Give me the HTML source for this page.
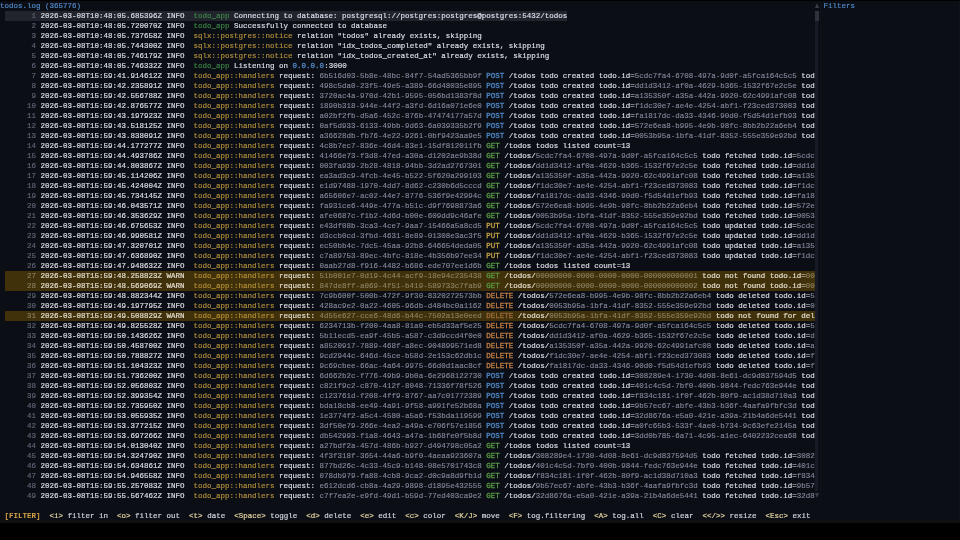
<!DOCTYPE html>
<html><head><meta charset="utf-8"><title>todos.log</title>
<style>
html,body{margin:0;padding:0;background:#000;}
body{width:960px;height:540px;overflow:hidden;position:relative;font-family:"Liberation Mono",monospace;}
#term{position:absolute;left:0;top:1px;width:960px;height:519.5px;background:#0c0e16;}
#redge{position:absolute;left:958.6px;top:1px;width:1.4px;height:519px;background:#10121b;}
#vline{position:absolute;left:819.5px;top:1px;width:1px;height:504px;background:#0f111a;}
#edge{position:absolute;left:0;top:520px;width:960px;height:3px;background:#101011;}
.r{position:absolute;left:0;height:10px;line-height:10px;font-size:7.5px;white-space:pre;color:#d3d6e0;letter-spacing:0;-webkit-text-stroke:0.2px;}
#txt{position:absolute;left:0;top:0;width:960px;height:540px;transform:translateZ(0);backface-visibility:hidden;}
.bg{position:absolute;height:10px;}
.sel{background:#21232d;}
.warn{background:#41310a;}
.ln{color:#5d6272;}
.tx{color:#d9dce6;}
.ti{color:#4f87c5;-webkit-text-stroke:0.2px;}
.g{color:#429249;-webkit-text-stroke:0.1px;}
.y{color:#b5923c;-webkit-text-stroke:0.15px;}
.u{color:#858a9b;-webkit-text-stroke:0.12px;}
.b{color:#4f88c6;-webkit-text-stroke:0.3px;}
.G{color:#589c46;-webkit-text-stroke:0.3px;}
.P{color:#c6a444;-webkit-text-stroke:0.3px;}
.D{color:#c07e42;-webkit-text-stroke:0.3px;}
.w .u{color:#8c8362;}
.w .ln{color:#857b5a;}
.w .tx{color:#e2dccb;}
.w .D{color:#9c6a3a;}
.w .G{color:#5a9640;}
.w .y{color:#b89236;}
.fm{color:#d4a346;font-weight:bold;-webkit-text-stroke:0;}
.k{color:#e3d4a2;}
.kd{color:#cfd2dc;}
.arr{position:absolute;width:4.5px;height:10px;}
.arr.up:after{content:"";position:absolute;left:0.1px;top:2.2px;border-left:2.25px solid transparent;border-right:2.25px solid transparent;border-bottom:5.2px solid #3a3d48;}
.arr.dn:after{content:"";position:absolute;left:0.1px;top:2.3px;border-left:2.25px solid transparent;border-right:2.25px solid transparent;border-top:5.2px solid #3a3d48;}
.thumb{position:absolute;width:4.3px;height:10px;background:#2f323d;}
.track{position:absolute;width:4.5px;}
.track:before{content:"";position:absolute;left:0.8px;top:0;bottom:0;width:3px;background:#181b25;}
</style></head>
<body>
<div id="term"></div>
<div id="redge"></div>
<div id="vline"></div>
<div id="edge"></div>
<div id="txt">
<div class="r " style="top:1px"><span class="ti">todos.log (365776)</span></div>
<div class="bg sel" style="top:10.6px;left:4.7px;width:562.5px"></div>
<div class="r " style="top:11px"><span class="ln">       1 </span><span class="tx">2026-03-08T10:48:05.685396Z </span><span class="tx">INFO  </span><span class="g">todo_app</span><span class="tx"> </span><span class="tx">Connecting to database: postgresql://postgres:postgres@postgres:5432/todos</span></div>
<div class="r " style="top:21px"><span class="ln">       2 </span><span class="tx">2026-03-08T10:48:05.720070Z </span><span class="tx">INFO  </span><span class="g">todo_app</span><span class="tx"> </span><span class="tx">Successfully connected to database</span></div>
<div class="r " style="top:31px"><span class="ln">       3 </span><span class="tx">2026-03-08T10:48:05.737658Z </span><span class="tx">INFO  </span><span class="y">sqlx::postgres::notice</span><span class="tx"> </span><span class="tx">relation "todos" already exists, skipping</span></div>
<div class="r " style="top:41px"><span class="ln">       4 </span><span class="tx">2026-03-08T10:48:05.744300Z </span><span class="tx">INFO  </span><span class="y">sqlx::postgres::notice</span><span class="tx"> </span><span class="tx">relation "idx_todos_completed" already exists, skipping</span></div>
<div class="r " style="top:51px"><span class="ln">       5 </span><span class="tx">2026-03-08T10:48:05.746179Z </span><span class="tx">INFO  </span><span class="y">sqlx::postgres::notice</span><span class="tx"> </span><span class="tx">relation "idx_todos_created_at" already exists, skipping</span></div>
<div class="r " style="top:61px"><span class="ln">       6 </span><span class="tx">2026-03-08T10:48:05.746332Z </span><span class="tx">INFO  </span><span class="g">todo_app</span><span class="tx"> </span><span class="tx">Listening on </span><span class="b">0.0.0.0</span><span class="tx">:3000</span></div>
<div class="r " style="top:71px"><span class="ln">       7 </span><span class="tx">2026-03-08T15:59:41.914612Z </span><span class="tx">INFO  </span><span class="y">todo_app::handlers</span><span class="tx"> </span><span class="tx">request: </span><span class="u">6b516d03-5b8e-48bc-84f7-54ad5365bb9f</span><span class="tx"> </span><span class="b">POST</span><span class="tx"> /todos todo created todo.id=</span><span class="u">5cdc7fa4-6708-497a-9d0f-a5fca164c5c5</span><span class="tx"> tod</span></div>
<div class="r " style="top:81px"><span class="ln">       8 </span><span class="tx">2026-03-08T15:59:42.235891Z </span><span class="tx">INFO  </span><span class="y">todo_app::handlers</span><span class="tx"> </span><span class="tx">request: </span><span class="u">498c5da0-23f5-49e5-a389-66d48035e895</span><span class="tx"> </span><span class="b">POST</span><span class="tx"> /todos todo created todo.id=</span><span class="u">dd1d3412-af0a-4629-b365-1532f67e2c5e</span><span class="tx"> tod</span></div>
<div class="r " style="top:91px"><span class="ln">       9 </span><span class="tx">2026-03-08T15:59:42.556788Z </span><span class="tx">INFO  </span><span class="y">todo_app::handlers</span><span class="tx"> </span><span class="tx">request: </span><span class="u">3720ac4a-970d-42b1-9595-056bd1383f8d</span><span class="tx"> </span><span class="b">POST</span><span class="tx"> /todos todo created todo.id=</span><span class="u">a135350f-a35a-442a-9920-62c4991afc08</span><span class="tx"> tod</span></div>
<div class="r " style="top:101px"><span class="ln">      10 </span><span class="tx">2026-03-08T15:59:42.876577Z </span><span class="tx">INFO  </span><span class="y">todo_app::handlers</span><span class="tx"> </span><span class="tx">request: </span><span class="u">1890b318-944e-44f2-a3fd-6d16a071e6e0</span><span class="tx"> </span><span class="b">POST</span><span class="tx"> /todos todo created todo.id=</span><span class="u">f1dc30e7-ae4e-4254-abf1-f23ced373083</span><span class="tx"> tod</span></div>
<div class="r " style="top:111px"><span class="ln">      11 </span><span class="tx">2026-03-08T15:59:43.197923Z </span><span class="tx">INFO  </span><span class="y">todo_app::handlers</span><span class="tx"> </span><span class="tx">request: </span><span class="u">a02bf2fb-d5a6-452c-876b-47474177a57d</span><span class="tx"> </span><span class="b">POST</span><span class="tx"> /todos todo created todo.id=</span><span class="u">fa1817dc-da33-4346-90d0-f5d54d1efb93</span><span class="tx"> tod</span></div>
<div class="r " style="top:121px"><span class="ln">      12 </span><span class="tx">2026-03-08T15:59:43.518125Z </span><span class="tx">INFO  </span><span class="y">todo_app::handlers</span><span class="tx"> </span><span class="tx">request: </span><span class="u">0af5d933-6133-49bb-9d63-6a039335b2f9</span><span class="tx"> </span><span class="b">POST</span><span class="tx"> /todos todo created todo.id=</span><span class="u">572e6ea8-b995-4e9b-98fc-8bb2b22a6eb4</span><span class="tx"> tod</span></div>
<div class="r " style="top:131px"><span class="ln">      13 </span><span class="tx">2026-03-08T15:59:43.838091Z </span><span class="tx">INFO  </span><span class="y">todo_app::handlers</span><span class="tx"> </span><span class="tx">request: </span><span class="u">a36628db-fb76-4e22-9261-0bf9423aa9e5</span><span class="tx"> </span><span class="b">POST</span><span class="tx"> /todos todo created todo.id=</span><span class="u">0053b95a-1bfa-41df-8352-555e359e92bd</span><span class="tx"> tod</span></div>
<div class="r " style="top:141px"><span class="ln">      14 </span><span class="tx">2026-03-08T15:59:44.177277Z </span><span class="tx">INFO  </span><span class="y">todo_app::handlers</span><span class="tx"> </span><span class="tx">request: </span><span class="u">4c8b7ec7-836e-46d4-83e1-15df812011fb</span><span class="tx"> </span><span class="G">GET</span><span class="tx"> /todos todos listed count=13</span></div>
<div class="r " style="top:151px"><span class="ln">      15 </span><span class="tx">2026-03-08T15:59:44.493786Z </span><span class="tx">INFO  </span><span class="y">todo_app::handlers</span><span class="tx"> </span><span class="tx">request: </span><span class="u">41466e73-f3d8-47ed-a30a-d1202ae9b38d</span><span class="tx"> </span><span class="G">GET</span><span class="tx"> /todos/</span><span class="u">5cdc7fa4-6708-497a-9d0f-a5fca164c5c5</span><span class="tx"> todo fetched todo.id=</span><span class="u">5cdc</span></div>
<div class="r " style="top:161px"><span class="ln">      16 </span><span class="tx">2026-03-08T15:59:44.803867Z </span><span class="tx">INFO  </span><span class="y">todo_app::handlers</span><span class="tx"> </span><span class="tx">request: </span><span class="u">003fa939-2b28-4818-94bb-3d2ad2767301</span><span class="tx"> </span><span class="G">GET</span><span class="tx"> /todos/</span><span class="u">dd1d3412-af0a-4629-b365-1532f67e2c5e</span><span class="tx"> todo fetched todo.id=</span><span class="u">dd1d</span></div>
<div class="r " style="top:171px"><span class="ln">      17 </span><span class="tx">2026-03-08T15:59:45.114206Z </span><span class="tx">INFO  </span><span class="y">todo_app::handlers</span><span class="tx"> </span><span class="tx">request: </span><span class="u">ea3ad3c9-4fcb-4e45-b522-5f620a299103</span><span class="tx"> </span><span class="G">GET</span><span class="tx"> /todos/</span><span class="u">a135350f-a35a-442a-9920-62c4991afc08</span><span class="tx"> todo fetched todo.id=</span><span class="u">a135</span></div>
<div class="r " style="top:181px"><span class="ln">      18 </span><span class="tx">2026-03-08T15:59:45.424004Z </span><span class="tx">INFO  </span><span class="y">todo_app::handlers</span><span class="tx"> </span><span class="tx">request: </span><span class="u">e1d97488-1970-4dd7-8d62-c230b6d5cccd</span><span class="tx"> </span><span class="G">GET</span><span class="tx"> /todos/</span><span class="u">f1dc30e7-ae4e-4254-abf1-f23ced373083</span><span class="tx"> todo fetched todo.id=</span><span class="u">f1dc</span></div>
<div class="r " style="top:191px"><span class="ln">      19 </span><span class="tx">2026-03-08T15:59:45.734145Z </span><span class="tx">INFO  </span><span class="y">todo_app::handlers</span><span class="tx"> </span><span class="tx">request: </span><span class="u">a65606e7-ac02-44e7-8776-536f9e42994c</span><span class="tx"> </span><span class="G">GET</span><span class="tx"> /todos/</span><span class="u">fa1817dc-da33-4346-90d0-f5d54d1efb93</span><span class="tx"> todo fetched todo.id=</span><span class="u">fa18</span></div>
<div class="r " style="top:201px"><span class="ln">      20 </span><span class="tx">2026-03-08T15:59:46.043571Z </span><span class="tx">INFO  </span><span class="y">todo_app::handlers</span><span class="tx"> </span><span class="tx">request: </span><span class="u">fa931ce6-449e-477a-b51c-d9f7698873a6</span><span class="tx"> </span><span class="G">GET</span><span class="tx"> /todos/</span><span class="u">572e6ea8-b995-4e9b-98fc-8bb2b22a6eb4</span><span class="tx"> todo fetched todo.id=</span><span class="u">572e</span></div>
<div class="r " style="top:211px"><span class="ln">      21 </span><span class="tx">2026-03-08T15:59:46.353629Z </span><span class="tx">INFO  </span><span class="y">todo_app::handlers</span><span class="tx"> </span><span class="tx">request: </span><span class="u">afe0687c-f1b2-4d6d-b00e-609dd9c46afe</span><span class="tx"> </span><span class="G">GET</span><span class="tx"> /todos/</span><span class="u">0053b95a-1bfa-41df-8352-555e359e92bd</span><span class="tx"> todo fetched todo.id=</span><span class="u">0053</span></div>
<div class="r " style="top:221px"><span class="ln">      22 </span><span class="tx">2026-03-08T15:59:46.675653Z </span><span class="tx">INFO  </span><span class="y">todo_app::handlers</span><span class="tx"> </span><span class="tx">request: </span><span class="u">e43df08b-3ca3-4ce7-9aa7-15466a5a8cd5</span><span class="tx"> </span><span class="P">PUT</span><span class="tx"> /todos/</span><span class="u">5cdc7fa4-6708-497a-9d0f-a5fca164c5c5</span><span class="tx"> todo updated todo.id=</span><span class="u">5cdc</span></div>
<div class="r " style="top:231px"><span class="ln">      23 </span><span class="tx">2026-03-08T15:59:46.990581Z </span><span class="tx">INFO  </span><span class="y">todo_app::handlers</span><span class="tx"> </span><span class="tx">request: </span><span class="u">d3ccb0cd-3fbd-4631-8e89-01308e3ac3f5</span><span class="tx"> </span><span class="P">PUT</span><span class="tx"> /todos/</span><span class="u">dd1d3412-af0a-4629-b365-1532f67e2c5e</span><span class="tx"> todo updated todo.id=</span><span class="u">dd1d</span></div>
<div class="r " style="top:241px"><span class="ln">      24 </span><span class="tx">2026-03-08T15:59:47.320701Z </span><span class="tx">INFO  </span><span class="y">todo_app::handlers</span><span class="tx"> </span><span class="tx">request: </span><span class="u">ec50bb4c-7dc5-45aa-92b8-646654deda05</span><span class="tx"> </span><span class="P">PUT</span><span class="tx"> /todos/</span><span class="u">a135350f-a35a-442a-9920-62c4991afc08</span><span class="tx"> todo updated todo.id=</span><span class="u">a135</span></div>
<div class="r " style="top:251px"><span class="ln">      25 </span><span class="tx">2026-03-08T15:59:47.636890Z </span><span class="tx">INFO  </span><span class="y">todo_app::handlers</span><span class="tx"> </span><span class="tx">request: </span><span class="u">c7a89753-89ec-4bfc-818e-4b356b97ee34</span><span class="tx"> </span><span class="P">PUT</span><span class="tx"> /todos/</span><span class="u">f1dc30e7-ae4e-4254-abf1-f23ced373083</span><span class="tx"> todo updated todo.id=</span><span class="u">f1dc</span></div>
<div class="r " style="top:261px"><span class="ln">      26 </span><span class="tx">2026-03-08T15:59:47.948632Z </span><span class="tx">INFO  </span><span class="y">todo_app::handlers</span><span class="tx"> </span><span class="tx">request: </span><span class="u">0aab27d8-f916-4482-b686-ede707ee1d6b</span><span class="tx"> </span><span class="G">GET</span><span class="tx"> /todos todos listed count=13</span></div>
<div class="bg warn" style="top:270.6px;left:4.7px;width:810px"></div>
<div class="r w" style="top:271px"><span class="ln">      27 </span><span class="tx">2026-03-08T15:59:48.258823Z </span><span class="tx">WARN  </span><span class="y">todo_app::handlers</span><span class="tx"> </span><span class="tx">request: </span><span class="u">51b001e7-0d19-4c44-acf9-18e94c235438</span><span class="tx"> </span><span class="G">GET</span><span class="tx"> /todos/</span><span class="u">00000000-0000-0000-0000-000000000001</span><span class="tx"> todo not found todo.id=</span><span class="u">00</span></div>
<div class="bg warn" style="top:280.6px;left:4.7px;width:810px"></div>
<div class="r w" style="top:281px"><span class="ln">      28 </span><span class="tx">2026-03-08T15:59:48.569069Z </span><span class="tx">WARN  </span><span class="y">todo_app::handlers</span><span class="tx"> </span><span class="tx">request: </span><span class="u">847de8ff-a069-4f51-b419-589733c7fab9</span><span class="tx"> </span><span class="G">GET</span><span class="tx"> /todos/</span><span class="u">00000000-0000-0000-0000-000000000002</span><span class="tx"> todo not found todo.id=</span><span class="u">00</span></div>
<div class="r " style="top:291px"><span class="ln">      29 </span><span class="tx">2026-03-08T15:59:48.882344Z </span><span class="tx">INFO  </span><span class="y">todo_app::handlers</span><span class="tx"> </span><span class="tx">request: </span><span class="u">7c9b600f-500b-472f-9f30-8320272573bb</span><span class="tx"> </span><span class="D">DELETE</span><span class="tx"> /todos/</span><span class="u">572e6ea8-b995-4e9b-98fc-8bb2b22a6eb4</span><span class="tx"> todo deleted todo.id=</span><span class="u">5</span></div>
<div class="r " style="top:301px"><span class="ln">      30 </span><span class="tx">2026-03-08T15:59:49.197795Z </span><span class="tx">INFO  </span><span class="y">todo_app::handlers</span><span class="tx"> </span><span class="tx">request: </span><span class="u">428ac9e2-0a22-4605-96db-d484bc0a1162</span><span class="tx"> </span><span class="D">DELETE</span><span class="tx"> /todos/</span><span class="u">0053b95a-1bfa-41df-8352-555e359e92bd</span><span class="tx"> todo deleted todo.id=</span><span class="u">0</span></div>
<div class="bg warn" style="top:310.6px;left:4.7px;width:810px"></div>
<div class="r w" style="top:311px"><span class="ln">      31 </span><span class="tx">2026-03-08T15:59:49.508829Z </span><span class="tx">WARN  </span><span class="y">todo_app::handlers</span><span class="tx"> </span><span class="tx">request: </span><span class="u">4d55e627-cce6-48d6-b44c-7502a13e0eed</span><span class="tx"> </span><span class="D">DELETE</span><span class="tx"> /todos/</span><span class="u">0053b95a-1bfa-41df-8352-555e359e92bd</span><span class="tx"> todo not found for del</span></div>
<div class="r " style="top:321px"><span class="ln">      32 </span><span class="tx">2026-03-08T15:59:49.825528Z </span><span class="tx">INFO  </span><span class="y">todo_app::handlers</span><span class="tx"> </span><span class="tx">request: </span><span class="u">6234713b-f200-4aa8-81a0-eb5d33af5e25</span><span class="tx"> </span><span class="D">DELETE</span><span class="tx"> /todos/</span><span class="u">5cdc7fa4-6708-497a-9d0f-a5fca164c5c5</span><span class="tx"> todo deleted todo.id=</span><span class="u">5</span></div>
<div class="r " style="top:331px"><span class="ln">      33 </span><span class="tx">2026-03-08T15:59:50.143626Z </span><span class="tx">INFO  </span><span class="y">todo_app::handlers</span><span class="tx"> </span><span class="tx">request: </span><span class="u">5b11ecd5-ea9f-45b5-a587-c3d9ccd4f0e0</span><span class="tx"> </span><span class="D">DELETE</span><span class="tx"> /todos/</span><span class="u">dd1d3412-af0a-4629-b365-1532f67e2c5e</span><span class="tx"> todo deleted todo.id=</span><span class="u">d</span></div>
<div class="r " style="top:341px"><span class="ln">      34 </span><span class="tx">2026-03-08T15:59:50.458700Z </span><span class="tx">INFO  </span><span class="y">todo_app::handlers</span><span class="tx"> </span><span class="tx">request: </span><span class="u">a8520917-7889-468f-a8ec-904899571ed8</span><span class="tx"> </span><span class="D">DELETE</span><span class="tx"> /todos/</span><span class="u">a135350f-a35a-442a-9920-62c4991afc08</span><span class="tx"> todo deleted todo.id=</span><span class="u">a</span></div>
<div class="r " style="top:351px"><span class="ln">      35 </span><span class="tx">2026-03-08T15:59:50.788827Z </span><span class="tx">INFO  </span><span class="y">todo_app::handlers</span><span class="tx"> </span><span class="tx">request: </span><span class="u">9cd2944c-646d-45ce-b58d-2e153c62db1c</span><span class="tx"> </span><span class="D">DELETE</span><span class="tx"> /todos/</span><span class="u">f1dc30e7-ae4e-4254-abf1-f23ced373083</span><span class="tx"> todo deleted todo.id=</span><span class="u">f</span></div>
<div class="r " style="top:361px"><span class="ln">      36 </span><span class="tx">2026-03-08T15:59:51.104323Z </span><span class="tx">INFO  </span><span class="y">todo_app::handlers</span><span class="tx"> </span><span class="tx">request: </span><span class="u">9c69cbee-66ac-4a64-9975-66d0d1aac8cf</span><span class="tx"> </span><span class="D">DELETE</span><span class="tx"> /todos/</span><span class="u">fa1817dc-da33-4346-90d0-f5d54d1efb93</span><span class="tx"> todo deleted todo.id=</span><span class="u">f</span></div>
<div class="r " style="top:371px"><span class="ln">      37 </span><span class="tx">2026-03-08T15:59:51.736200Z </span><span class="tx">INFO  </span><span class="y">todo_app::handlers</span><span class="tx"> </span><span class="tx">request: </span><span class="u">6d662b2c-f776-49b9-9b0a-6e2968122730</span><span class="tx"> </span><span class="b">POST</span><span class="tx"> /todos todo created todo.id=</span><span class="u">308289e4-1730-4d08-8e61-dc9d837594d5</span><span class="tx"> tod</span></div>
<div class="r " style="top:381px"><span class="ln">      38 </span><span class="tx">2026-03-08T15:59:52.056803Z </span><span class="tx">INFO  </span><span class="y">todo_app::handlers</span><span class="tx"> </span><span class="tx">request: </span><span class="u">c821f9c2-c870-412f-8048-71336f78f526</span><span class="tx"> </span><span class="b">POST</span><span class="tx"> /todos todo created todo.id=</span><span class="u">401c4c5d-7bf0-400b-9844-fedc763e944e</span><span class="tx"> tod</span></div>
<div class="r " style="top:391px"><span class="ln">      39 </span><span class="tx">2026-03-08T15:59:52.399354Z </span><span class="tx">INFO  </span><span class="y">todo_app::handlers</span><span class="tx"> </span><span class="tx">request: </span><span class="u">c123761d-f208-4ff9-8767-aa7c01772389</span><span class="tx"> </span><span class="b">POST</span><span class="tx"> /todos todo created todo.id=</span><span class="u">f834c181-1f0f-462b-80f9-ac1d38d710a3</span><span class="tx"> tod</span></div>
<div class="r " style="top:401px"><span class="ln">      40 </span><span class="tx">2026-03-08T15:59:52.735950Z </span><span class="tx">INFO  </span><span class="y">todo_app::handlers</span><span class="tx"> </span><span class="tx">request: </span><span class="u">bda18cb8-ee49-4a91-9f58-a991fe52b68a</span><span class="tx"> </span><span class="b">POST</span><span class="tx"> /todos todo created todo.id=</span><span class="u">9b57ec67-abfe-43b3-b36f-4aafa9fbfc3d</span><span class="tx"> tod</span></div>
<div class="r " style="top:411px"><span class="ln">      41 </span><span class="tx">2026-03-08T15:59:53.055935Z </span><span class="tx">INFO  </span><span class="y">todo_app::handlers</span><span class="tx"> </span><span class="tx">request: </span><span class="u">1e3774f2-a5c4-4580-a5a6-f53bda119599</span><span class="tx"> </span><span class="b">POST</span><span class="tx"> /todos todo created todo.id=</span><span class="u">32d8676a-e5a0-421e-a39a-21b4a6de5441</span><span class="tx"> tod</span></div>
<div class="r " style="top:421px"><span class="ln">      42 </span><span class="tx">2026-03-08T15:59:53.377215Z </span><span class="tx">INFO  </span><span class="y">todo_app::handlers</span><span class="tx"> </span><span class="tx">request: </span><span class="u">3df50e79-266e-4ea2-a49a-e706f57e1856</span><span class="tx"> </span><span class="b">POST</span><span class="tx"> /todos todo created todo.id=</span><span class="u">a0fc65b3-533f-4ae0-b734-9c63efe2145a</span><span class="tx"> tod</span></div>
<div class="r " style="top:431px"><span class="ln">      43 </span><span class="tx">2026-03-08T15:59:53.697266Z </span><span class="tx">INFO  </span><span class="y">todo_app::handlers</span><span class="tx"> </span><span class="tx">request: </span><span class="u">db542993-f1a8-4643-a47a-1b68fe0f5b8d</span><span class="tx"> </span><span class="b">POST</span><span class="tx"> /todos todo created todo.id=</span><span class="u">3dd0b785-6a71-4c95-a1ec-6402232cea68</span><span class="tx"> tod</span></div>
<div class="r " style="top:441px"><span class="ln">      44 </span><span class="tx">2026-03-08T15:59:54.013040Z </span><span class="tx">INFO  </span><span class="y">todo_app::handlers</span><span class="tx"> </span><span class="tx">request: </span><span class="u">a27bdf2a-457d-486b-b927-d494798c05a2</span><span class="tx"> </span><span class="G">GET</span><span class="tx"> /todos todos listed count=13</span></div>
<div class="r " style="top:451px"><span class="ln">      45 </span><span class="tx">2026-03-08T15:59:54.324790Z </span><span class="tx">INFO  </span><span class="y">todo_app::handlers</span><span class="tx"> </span><span class="tx">request: </span><span class="u">4f3f318f-3654-44a6-b9f0-4aeaa923607a</span><span class="tx"> </span><span class="G">GET</span><span class="tx"> /todos/</span><span class="u">308289e4-1730-4d08-8e61-dc9d837594d5</span><span class="tx"> todo fetched todo.id=</span><span class="u">3082</span></div>
<div class="r " style="top:461px"><span class="ln">      46 </span><span class="tx">2026-03-08T15:59:54.634861Z </span><span class="tx">INFO  </span><span class="y">todo_app::handlers</span><span class="tx"> </span><span class="tx">request: </span><span class="u">877bd26c-4c33-45c9-b148-08e5701743c8</span><span class="tx"> </span><span class="G">GET</span><span class="tx"> /todos/</span><span class="u">401c4c5d-7bf0-400b-9844-fedc763e944e</span><span class="tx"> todo fetched todo.id=</span><span class="u">401c</span></div>
<div class="r " style="top:471px"><span class="ln">      47 </span><span class="tx">2026-03-08T15:59:54.946558Z </span><span class="tx">INFO  </span><span class="y">todo_app::handlers</span><span class="tx"> </span><span class="tx">request: </span><span class="u">078db979-fa88-4cb8-9ca2-d0c9a8d9fb1d</span><span class="tx"> </span><span class="G">GET</span><span class="tx"> /todos/</span><span class="u">f834c181-1f0f-462b-80f9-ac1d38d710a3</span><span class="tx"> todo fetched todo.id=</span><span class="u">f834</span></div>
<div class="r " style="top:481px"><span class="ln">      48 </span><span class="tx">2026-03-08T15:59:55.257083Z </span><span class="tx">INFO  </span><span class="y">todo_app::handlers</span><span class="tx"> </span><span class="tx">request: </span><span class="u">e612dcd6-cb8a-4a29-9898-d1895e432555</span><span class="tx"> </span><span class="G">GET</span><span class="tx"> /todos/</span><span class="u">9b57ec67-abfe-43b3-b36f-4aafa9fbfc3d</span><span class="tx"> todo fetched todo.id=</span><span class="u">9b57</span></div>
<div class="r " style="top:491px"><span class="ln">      49 </span><span class="tx">2026-03-08T15:59:55.567462Z </span><span class="tx">INFO  </span><span class="y">todo_app::handlers</span><span class="tx"> </span><span class="tx">request: </span><span class="u">c7f7ea2e-e9fd-49d1-b59d-77ed403ca9e2</span><span class="tx"> </span><span class="G">GET</span><span class="tx"> /todos/</span><span class="u">32d8676a-e5a0-421e-a39a-21b4a6de5441</span><span class="tx"> todo fetched todo.id=</span><span class="u">32d8</span></div>
<div class="arr up" style="left:814.5px;top:1px"></div>
<div class="track" style="left:814.5px;top:21px;height:470px"></div>
<div class="thumb" style="left:814.5px;top:11px"></div>
<div class="arr dn" style="left:814.5px;top:491px"></div>
<div class="r" style="top:1px;left:823.5px"><span class="ti">Filters</span></div>
<div class="r " style="top:511px"><span class="tx"> </span><span class="fm">[FILTER]</span><span class="tx">  </span><span class="k">&lt;i&gt;</span><span class="kd"> filter in  </span><span class="k">&lt;o&gt;</span><span class="kd"> filter out  </span><span class="k">&lt;t&gt;</span><span class="kd"> date  </span><span class="k">&lt;Space&gt;</span><span class="kd"> toggle  </span><span class="k">&lt;d&gt;</span><span class="kd"> delete  </span><span class="k">&lt;e&gt;</span><span class="kd"> edit  </span><span class="k">&lt;c&gt;</span><span class="kd"> color  </span><span class="k">&lt;K/J&gt;</span><span class="kd"> move  </span><span class="k">&lt;F&gt;</span><span class="kd"> tog.filtering  </span><span class="k">&lt;A&gt;</span><span class="kd"> tog.all  </span><span class="k">&lt;C&gt;</span><span class="kd"> clear  </span><span class="k">&lt;&lt;/&gt;&gt;</span><span class="kd"> resize  </span><span class="k">&lt;Esc&gt;</span><span class="kd"> exit</span></div>
</div>
</body></html>
